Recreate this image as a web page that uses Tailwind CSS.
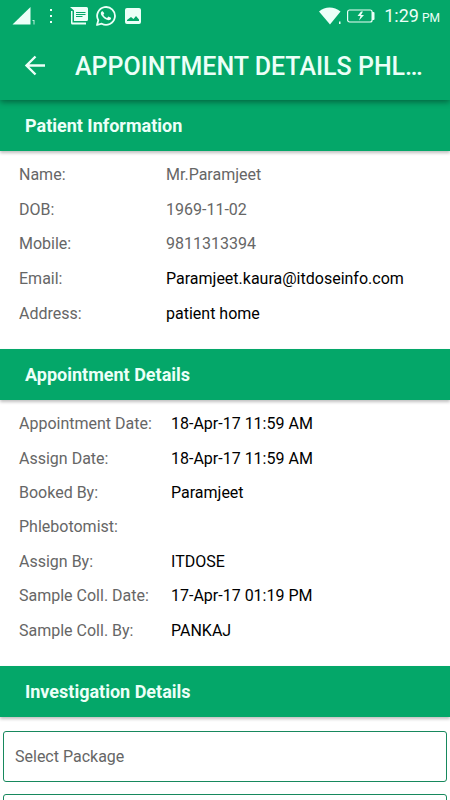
<!DOCTYPE html>
<html lang="en">

<head>
    <meta charset="UTF-8">
    <meta name="viewport" content="width=device-width, initial-scale=1">
    <title>Appointment Details</title>
    <script src="https://cdn.jsdelivr.net/npm/@tailwindcss/browser@4"></script>
</head>

<body class="bg-white font-['Roboto',sans-serif] text-base text-black h-screen overflow-hidden">
    <!-- Header -->
    <header class="relative z-10 bg-[#04a769] text-[#ecfff8] shadow-[0_2px_6px_rgba(0,0,0,0.4)]">
        <div class="flex items-center justify-between h-[31px] pl-3 pr-[10px]">
            <div class="flex items-center">
                <svg class="w-[24px] h-[18px]" viewBox="0 0 24 18" fill="currentColor">
                    <path d="M.5 17.500 18.500 0v17.500z"></path>
                    <path d="M20.500 13h2v4.500h-1v-3.500h-1z" opacity=".8"></path>
                </svg>
                <svg class="w-[4px] h-[18px] ml-[13px]" viewBox="0 0 4 18" fill="currentColor">
                    <path d="M1 2h2v2H1zM1 8h2v2H1zM1 14h2v2H1z"></path>
                </svg>
                <svg class="w-[18px] h-[18px] ml-[17px]" viewBox="0 0 18 18" fill="currentColor">
                    <path d="M0 0h16.500A1.500 1.500 0 0 1 18 1.500v11a1.500 1.500 0 0 1-1.500 1.500H4V3.500zM1 4h1.500v11.500H16V17.500H2.500A1.500 1.500 0 0 1 1 16z"></path>
                    <path d="M6 5.500h9.500M6 7.500h9.500M6 9.500h6.500" stroke="#04a769" stroke-width="1"></path>
                </svg>
                <svg class="w-[20px] h-[20px] ml-2" viewBox="0 0 20 20" fill="none">
                    <path d="M1 19l1.300-4.700A8.900 8.900 0 1 1 5.700 17.700z" stroke="currentColor" stroke-width="1.800" stroke-linejoin="round"></path>
                    <path d="M7.300 5.200c-.3-.6-.5-.6-.8-.6-.9 0-1.800.9-1.800 2.400 0 1.400 1 2.800 1.200 3 .1.200 2 3.200 5 4.300 2.400 1 3 .8 3.500.7.600-.1 1.700-.7 2-1.400.2-.7.200-1.200.1-1.300l-2.500-1.300c-.3-.1-.5-.1-.7.200l-1 1.200c-.2.2-.4.200-.7.100-.8-.3-2.800-1.400-3.900-3.400-.2-.3 0-.5.100-.6.400-.4.700-.8.800-1.200 0-.2 0-.3-.1-.5z" fill="currentColor" transform="translate(.8 1.200) scale(.86)"></path>
                </svg>
                <svg class="w-[18px] h-[18px] ml-2" viewBox="0 0 18 18" fill="currentColor">
                    <path fill-rule="evenodd" d="M3 1h12a2 2 0 0 1 2 2v12a2 2 0 0 1-2 2H3a2 2 0 0 1-2-2V3a2 2 0 0 1 2-2zm0 13h12v-1.500l-3-3.500-2.500 3-2.500-2L3 13z"></path>
                </svg>
            </div>
            <div class="flex items-center">
                <svg class="w-[23px] h-[18px]" viewBox="0 0 23 18" fill="currentColor">
                    <path d="M0 4.500C6-.8 15-.8 21.500 4.500L11 17.500z"></path>
                    <path d="M20 14.500h1.500V17H20z"></path>
                </svg>
                <svg class="w-[28px] h-[14px] ml-[5px]" viewBox="0 0 28 14" fill="none">
                    <rect x=".6" y="1" width="24.500" height="12" rx="2" stroke="currentColor" stroke-width="1.200"></rect>
                    <path d="M25 3h1.500q1 0 1 1V10q0 1-1 1H25zM14 2.500l-3.500 4.500h3l-1.500 4.500 5-5.500h-3l2-3.500z" fill="currentColor"></path>
                </svg>
                <p class="ml-[9px] text-lg leading-6">1:29<span class="ml-[3px] text-xs">PM</span></p>
            </div>
        </div>
        <div class="flex items-center h-[69px] px-6">
            <button type="button" aria-label="Back" class="shrink-0">
                <svg class="w-[22px] h-[22px]" viewBox="0 0 22 22" fill="none" stroke="currentColor" stroke-width="2.400">
                    <path d="M21 10.500H3M11.500 1.500l-9 9 9 9"></path>
                </svg>
            </button>
            <h1 class="ml-[29px] pt-[2px] text-[25px] leading-8 font-medium whitespace-nowrap">APPOINTMENT DETAILS PHL…</h1>
        </div>
    </header>

    <!-- Patient -->
    <h2 class="flex items-center h-[51px] px-[25px] bg-[#04a769] text-[#ecfff8] text-lg font-bold shadow-[0_2px_3px_rgba(0,0,0,0.25)]">Patient Information</h2>
    <dl class="grid grid-cols-[147px_1fr] auto-rows-fr items-center min-h-[198px] pt-[7px] pb-[18px] px-[19px] text-[#666]">
        <dt>Name:</dt>
        <dd>Mr.Paramjeet</dd>
        <dt>DOB:</dt>
        <dd>1969-11-02</dd>
        <dt>Mobile:</dt>
        <dd>9811313394</dd>
        <dt>Email:</dt>
        <dd class="text-black">Paramjeet.kaura@itdoseinfo.com</dd>
        <dt>Address:</dt>
        <dd class="text-black">patient home</dd>
    </dl>

    <!-- Appointment -->
    <h2 class="flex items-center h-[51px] px-[25px] bg-[#04a769] text-[#ecfff8] text-lg font-bold shadow-[0_2px_3px_rgba(0,0,0,0.25)]">Appointment Details</h2>
    <dl class="grid grid-cols-[152px_1fr] auto-rows-fr items-center min-h-[266px] pt-[7px] pb-[18px] px-[19px] text-[#666]">
        <dt>Appointment Date:</dt>
        <dd class="text-black">18-Apr-17 11:59 AM</dd>
        <dt>Assign Date:</dt>
        <dd class="text-black">18-Apr-17 11:59 AM</dd>
        <dt>Booked By:</dt>
        <dd class="text-black">Paramjeet</dd>
        <dt>Phlebotomist:</dt>
        <dd></dd>
        <dt>Assign By:</dt>
        <dd class="text-black">ITDOSE</dd>
        <dt>Sample Coll. Date:</dt>
        <dd class="text-black">17-Apr-17 01:19 PM</dd>
        <dt>Sample Coll. By:</dt>
        <dd class="text-black">PANKAJ</dd>
    </dl>

    <!-- Investigation -->
    <h2 class="flex items-center h-[51px] px-[25px] bg-[#04a769] text-[#ecfff8] text-lg font-bold shadow-[0_2px_3px_rgba(0,0,0,0.25)]">Investigation Details</h2>
    <form class="flex flex-col gap-3 pt-[14px] px-[3px]">
        <input type="text" aria-label="Select Package" placeholder="Select Package" class="w-full h-[51px] px-[11px] border border-[#17885d] rounded-[3px] placeholder:text-[#666] focus:outline-none">
        <input type="text" aria-label="Investigation" class="w-full h-[51px] px-[11px] border border-[#17885d] rounded-[3px] focus:outline-none">
    </form>
</body>

</html>
